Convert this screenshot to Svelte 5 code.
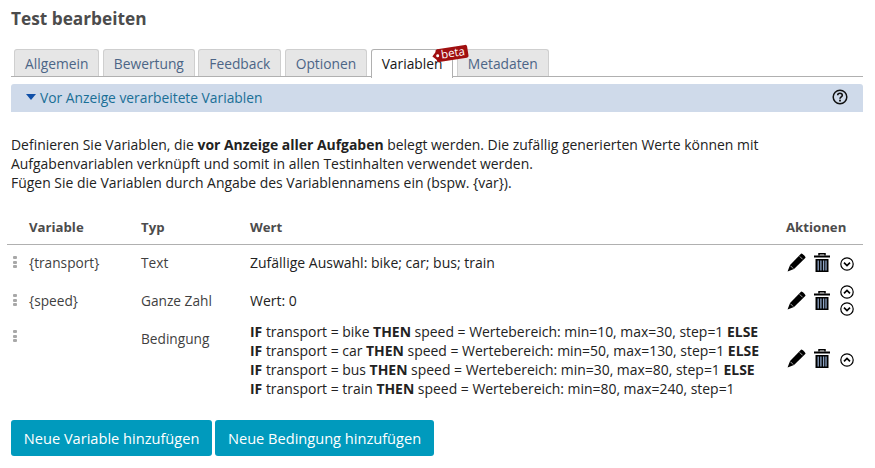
<script>
	const tabs = ['Allgemein', 'Bewertung', 'Feedback', 'Optionen', 'Variablen', 'Metadaten'];
	const conditions = [
		['bike', 'min=10, max=30, step=1', true],
		['car', 'min=50, max=130, step=1', true],
		['bus', 'min=30, max=80, step=1', true],
		['train', 'min=80, max=240, step=1', false]
	];
</script>

{#snippet pencil()}
	<svg class="pencil" viewBox="0 0 20 20" width="19" height="19" aria-hidden="true">
		<path d="M15 0.5 C16 0.2 19.8 4 19.5 5 L7.4 16.8 L0.6 19.6 L3.2 12.6 Z" fill="#000" />
		<path d="M3.6 13.4 L6.6 16.4 M13.4 3.6 L16.4 6.6" stroke="#fff" stroke-width="0.7" fill="none" />
	</svg>
{/snippet}

{#snippet trash()}
	<svg class="trash" viewBox="0 0 16 19" width="16" height="19" aria-hidden="true">
		<path d="M5 2.5 V0.8 H11 V2.5" fill="none" stroke="#000" stroke-width="1.5" />
		<rect x="0" y="2.5" width="16" height="2" fill="#000" />
		<path d="M1.5 6 H14.5 V19 H1.5 Z" fill="#000" />
		<path d="M4.2 7.5 V17.5 M6.9 7.5 V17.5 M9.6 7.5 V17.5 M12 7.5 V17.5" stroke="#8fa6c8" stroke-width="1.3" />
	</svg>
{/snippet}

{#snippet chevron(up)}
	<svg class="chev" viewBox="0 0 14 14" width="14" height="14" aria-hidden="true">
		<circle cx="7" cy="7" r="6.2" fill="none" stroke="#000" stroke-width="1.2" />
		<path d={up ? 'M4 8.3 L7 5.4 L10 8.3' : 'M4 5.7 L7 8.6 L10 5.7'} fill="none" stroke="#000" stroke-width="1.7" />
	</svg>
{/snippet}

{#snippet grip()}
	<span class="grip"><i></i><i></i><i></i></span>
{/snippet}

<div class="page">
	<h1>Test bearbeiten</h1>

	<ul class="tabs">
		{#each tabs as tab}
			<li class:active={tab === 'Variablen'}>
				{tab}
				{#if tab === 'Variablen'}
					<span class="beta">beta</span>
				{/if}
			</li>
		{/each}
	</ul>

	<div class="panel-head">
		<span class="caret"></span>
		<span class="panel-title">Vor Anzeige verarbeitete Variablen</span>
		<svg class="help" viewBox="0 0 16 16" width="16" height="16" aria-hidden="true">
			<circle cx="8" cy="8" r="6.8" fill="none" stroke="#111" stroke-width="1.5" />
			<path d="M5.7 6.3 C5.7 3.6 10.3 3.6 10.3 6.2 C10.3 7.9 8 7.8 8 9.7" fill="none" stroke="#111" stroke-width="1.6" />
			<rect x="7.1" y="10.7" width="1.8" height="1.8" fill="#111" />
		</svg>
	</div>

	<p class="info">
		Definieren Sie Variablen, die <b>vor Anzeige aller Aufgaben</b> belegt werden. Die zufällig generierten Werte können mit<br />
		Aufgabenvariablen verknüpft und somit in allen Testinhalten verwendet werden.<br />
		Fügen Sie die Variablen durch Angabe des Variablennamens ein (bspw. {'{var}'}).
	</p>

	<div class="table">
		<div class="row head">
			<div></div>
			<div>Variable</div>
			<div>Typ</div>
			<div>Wert</div>
			<div class="aktionen">Aktionen</div>
		</div>

		<div class="row r1">
			<div>{@render grip()}</div>
			<div>{'{transport}'}</div>
			<div>Text</div>
			<div class="value">Zufällige Auswahl: bike; car; bus; train</div>
			<div class="actions">{@render pencil()}{@render trash()}<span class="chevs single">{@render chevron(false)}</span></div>
		</div>

		<div class="row r2">
			<div>{@render grip()}</div>
			<div>{'{speed}'}</div>
			<div>Ganze Zahl</div>
			<div class="value">Wert: 0</div>
			<div class="actions">{@render pencil()}{@render trash()}<span class="chevs">{@render chevron(true)}{@render chevron(false)}</span></div>
		</div>

		<div class="row r3">
			<div>{@render grip()}</div>
			<div></div>
			<div class="cond-type">Bedingung</div>
			<div class="conds">
				{#each conditions as [vehicle, range, more]}
					<div><b>IF</b> transport = {vehicle} <b>THEN</b> speed = Wertebereich: {range}{#if more}&nbsp;<b>ELSE</b>{/if}</div>
				{/each}
			</div>
			<div class="actions mid">{@render pencil()}{@render trash()}<span class="chevs single">{@render chevron(true)}</span></div>
		</div>
	</div>

	<div class="buttons">
		<button>Neue Variable hinzufügen</button>
		<button>Neue Bedingung hinzufügen</button>
	</div>
</div>

<style>
	:global(body) {
		background: #fff;
	}

	.page {
		width: 875px;
		height: 468px;
		box-sizing: border-box;
		padding: 8px 12px 0 11px;
		font-family: 'Open Sans', sans-serif;
		font-size: 14px;
		color: #222;
		overflow: hidden;
	}

	h1 {
		margin: 0;
		font-size: 17.25px;
		line-height: 22px;
		font-weight: 700;
		color: #4c4c4c;
	}

	.tabs {
		display: flex;
		gap: 3.4px;
		list-style: none;
		margin: 19px 0 0;
		padding: 0 0 0 3px;
		height: 27px;
		border-bottom: 1px solid #b0b0b0;
		font-size: 13.8px;
	}

	.tabs li {
		position: relative;
		box-sizing: border-box;
		height: 27px;
		padding: 3px 10px 0;
		background: #e6e6e6;
		border: 1px solid #cfcfcf;
		border-bottom: 0;
		border-radius: 3px 3px 0 0;
		line-height: 22px;
		color: #4c6586;
	}

	.tabs li.active {
		height: 29px;
		background: #fff;
		border-color: #b0b0b0;
		color: #161616;
		z-index: 1;
	}

	.beta {
		position: absolute;
		left: 64px;
		top: -3px;
		padding: 0 3px 0 5px;
		height: 13px;
		line-height: 12px;
		font-size: 11.5px;
		color: #fff;
		background: #a00f10;
		border-radius: 2px;
		transform: rotate(-9deg);
	}

	.beta::before {
		content: '';
		position: absolute;
		left: -2px;
		top: 2px;
		width: 9px;
		height: 9px;
		background: #a00f10;
		transform: rotate(45deg);
		z-index: -1;
	}

	.beta::after {
		content: '';
		position: absolute;
		left: 0;
		top: 5px;
		width: 3px;
		height: 3px;
		border-radius: 50%;
		background: #fff;
	}

	.panel-head {
		display: flex;
		align-items: center;
		height: 28px;
		margin-top: 7px;
		padding: 0 15px 2px 15px;
		box-sizing: border-box;
		background: #cfdaea;
		border-radius: 3px 3px 0 0;
	}

	.caret {
		width: 0;
		height: 0;
		border: 5px solid transparent;
		border-top: 6px solid #0f4fa8;
		border-bottom: 0;
		margin-right: 4px;
	}

	.panel-title {
		flex: 1;
		font-size: 13.8px;
		color: #1a6f96;
	}

	.info {
		margin: 23px 0 0;
		line-height: 19px;
		font-size: 13.95px;
	}

	.table {
		margin: 25px 0 0 -4px;
	}

	.row {
		display: grid;
		grid-template-columns: 22px 112px 109px 1fr 78px;
		color: #3f3f3f;
		font-size: 13.7px;
	}

	.head {
		height: 28px;
		padding-bottom: 7px;
		box-sizing: border-box;
		align-items: center;
		border-bottom: 1px solid #b0b0b0;
		font-size: 13.2px;
		font-weight: 700;
		color: #4c4c4c;
	}

	.aktionen {
		padding-left: 1px;
	}

	.r1,
	.r2 {
		box-sizing: border-box;
		align-items: center;
	}

	.r1 {
		height: 39px;
		padding: 1px 0 6px;
	}

	.r2 {
		height: 38px;
		padding-bottom: 6px;
	}

	.r3 {
		height: 76px;
	}

	.value {
		font-size: 14px;
		color: #222;
	}

	.conds {
		line-height: 19px;
		font-size: 13.95px;
		white-space: nowrap;
		color: #222;
	}

	.cond-type {
		padding-top: 7px;
		line-height: 19px;
	}

	.grip {
		display: flex;
		flex-direction: column;
		gap: 1.5px;
		margin: 0 0 0 6px;
		width: 4px;
	}

	.r3 .grip {
		margin-top: 8px;
	}

	.grip i {
		display: block;
		width: 4px;
		height: 3px;
		background: #a8a8a8;
		border-radius: 1px;
	}

	.actions {
		display: flex;
		align-items: center;
		gap: 8px;
		padding-left: 2px;
	}

	.actions.mid {
		padding-bottom: 4px;
	}

	.chevs {
		display: flex;
		flex-direction: column;
		gap: 3px;
		margin-left: 2px;
	}

	.chevs.single {
		margin-top: 3px;
	}

	.chev {
		display: block;
	}

	.buttons {
		display: flex;
		gap: 3px;
		margin-top: 22px;
	}

	button {
		height: 36px;
		padding: 0 12.8px;
		background: #009abd;
		color: #fff;
		border: 0;
		border-radius: 3px;
		font-family: inherit;
		font-size: 14.6px;
	}
</style>
